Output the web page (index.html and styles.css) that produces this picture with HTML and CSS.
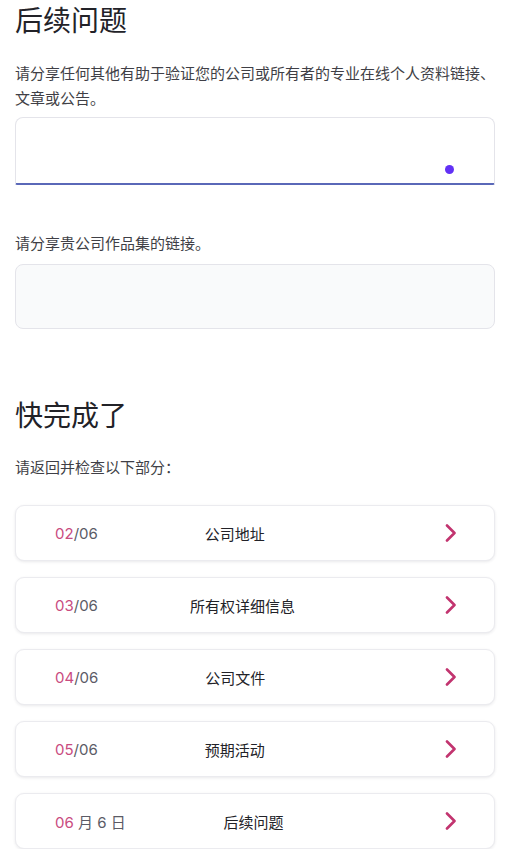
FILE: index.html
```html
<!DOCTYPE html>
<html lang="zh-CN">
<head>
<meta charset="utf-8">
<title>后续问题</title>
<link rel="stylesheet" href="styles.css">
</head>
<body>
<main class="page">
  <h1 class="heading first">后续问题</h1>
  <p class="desc">请分享任何其他有助于验证您的公司或所有者的专业在线个人资料链接、文章或公告。</p>
  <div class="field focused">
    <span class="dot"></span>
  </div>

  <p class="label">请分享贵公司作品集的链接。</p>
  <div class="field muted"></div>

  <h1 class="heading second">快完成了</h1>
  <p class="desc review">请返回并检查以下部分：</p>

  <ul class="steps">
    <li class="step">
      <div class="info"><span class="num"><em>02</em>/06</span><span class="title">公司地址</span></div>
      <svg class="chev" viewBox="0 0 12 18" width="12" height="18"><path d="M2 1.5 L9.5 9 L2 16.5" fill="none" stroke="currentColor" stroke-width="2.6" stroke-linecap="round" stroke-linejoin="round"/></svg>
    </li>
    <li class="step">
      <div class="info"><span class="num"><em>03</em>/06</span><span class="title">所有权详细信息</span></div>
      <svg class="chev" viewBox="0 0 12 18" width="12" height="18"><path d="M2 1.5 L9.5 9 L2 16.5" fill="none" stroke="currentColor" stroke-width="2.6" stroke-linecap="round" stroke-linejoin="round"/></svg>
    </li>
    <li class="step">
      <div class="info"><span class="num"><em>04</em>/06</span><span class="title">公司文件</span></div>
      <svg class="chev" viewBox="0 0 12 18" width="12" height="18"><path d="M2 1.5 L9.5 9 L2 16.5" fill="none" stroke="currentColor" stroke-width="2.6" stroke-linecap="round" stroke-linejoin="round"/></svg>
    </li>
    <li class="step">
      <div class="info"><span class="num"><em>05</em>/06</span><span class="title">预期活动</span></div>
      <svg class="chev" viewBox="0 0 12 18" width="12" height="18"><path d="M2 1.5 L9.5 9 L2 16.5" fill="none" stroke="currentColor" stroke-width="2.6" stroke-linecap="round" stroke-linejoin="round"/></svg>
    </li>
    <li class="step">
      <div class="info"><span class="num"><em>06</em> 月 6 日</span><span class="title">后续问题</span></div>
      <svg class="chev" viewBox="0 0 12 18" width="12" height="18"><path d="M2 1.5 L9.5 9 L2 16.5" fill="none" stroke="currentColor" stroke-width="2.6" stroke-linecap="round" stroke-linejoin="round"/></svg>
    </li>
  </ul>
</main>
</body>
</html>
```
FILE: styles.css
```css
* { box-sizing: border-box; }

html, body {
  margin: 0;
  padding: 0;
  background: #ffffff;
}

body {
  font-family: Inter, "Noto Sans CJK SC", "Noto Sans", sans-serif;
  color: #222226;
}

.page {
  width: 480px;
  margin-left: 15px;
}

.heading {
  font-family: "Noto Sans CJK SC", sans-serif;
  font-size: 28px;
  font-weight: 400;
  line-height: 34px;
  margin: 0;
  color: #222228;
}

.heading.first { margin-top: 2px; }
.heading.second { margin-top: 68px; }

.desc, .label {
  font-family: "Noto Sans CJK SC", sans-serif;
  font-size: 15px;
  line-height: 25px;
  color: #3f3f46;
  margin: 0;
}

.desc { margin-top: 24px; }
.desc.review { margin-top: 23px; }
.label { margin-top: 45px; }

.field {
  position: relative;
  width: 480px;
  border: 1px solid #e4e4ea;
  border-radius: 8px;
  background: #ffffff;
}

.field.focused {
  margin-top: 7px;
  height: 68px;
  border-bottom: 2.5px solid #5a68b8;
  border-bottom-left-radius: 2px;
  border-bottom-right-radius: 2px;
}

.field.muted {
  margin-top: 9px;
  height: 65px;
  background: #f9fafb;
}

.dot {
  position: absolute;
  right: 40px;
  bottom: 9px;
  width: 9px;
  height: 9px;
  border-radius: 50%;
  background: #6231f5;
}

.steps {
  list-style: none;
  margin: 26px 0 0;
  padding: 0;
  display: flex;
  flex-direction: column;
  gap: 16px;
}

.step {
  height: 56px;
  border: 1px solid #ebebef;
  border-radius: 9px;
  background: #ffffff;
  box-shadow: 0 1px 3px rgba(40, 40, 60, 0.10);
  display: flex;
  align-items: center;
  padding: 0 37px 0 39px;
}

.info {
  flex: 1 1 auto;
  display: flex;
  align-items: center;
  margin-right: -34px;
}

.num {
  flex: 1 1 auto;
  font-family: Inter, "Noto Sans CJK SC", sans-serif;
  font-size: 15px;
  color: #5b5b66;
  white-space: nowrap;
}

.num em {
  font-style: normal;
  color: #c94b7f;
}

.title {
  flex: 2 1 auto;
  font-family: "Noto Sans CJK SC", sans-serif;
  font-size: 15px;
  color: #222228;
  white-space: nowrap;
}

.chev {
  flex: none;
  color: #c2346f;
  position: relative;
  z-index: 1;
}
```
